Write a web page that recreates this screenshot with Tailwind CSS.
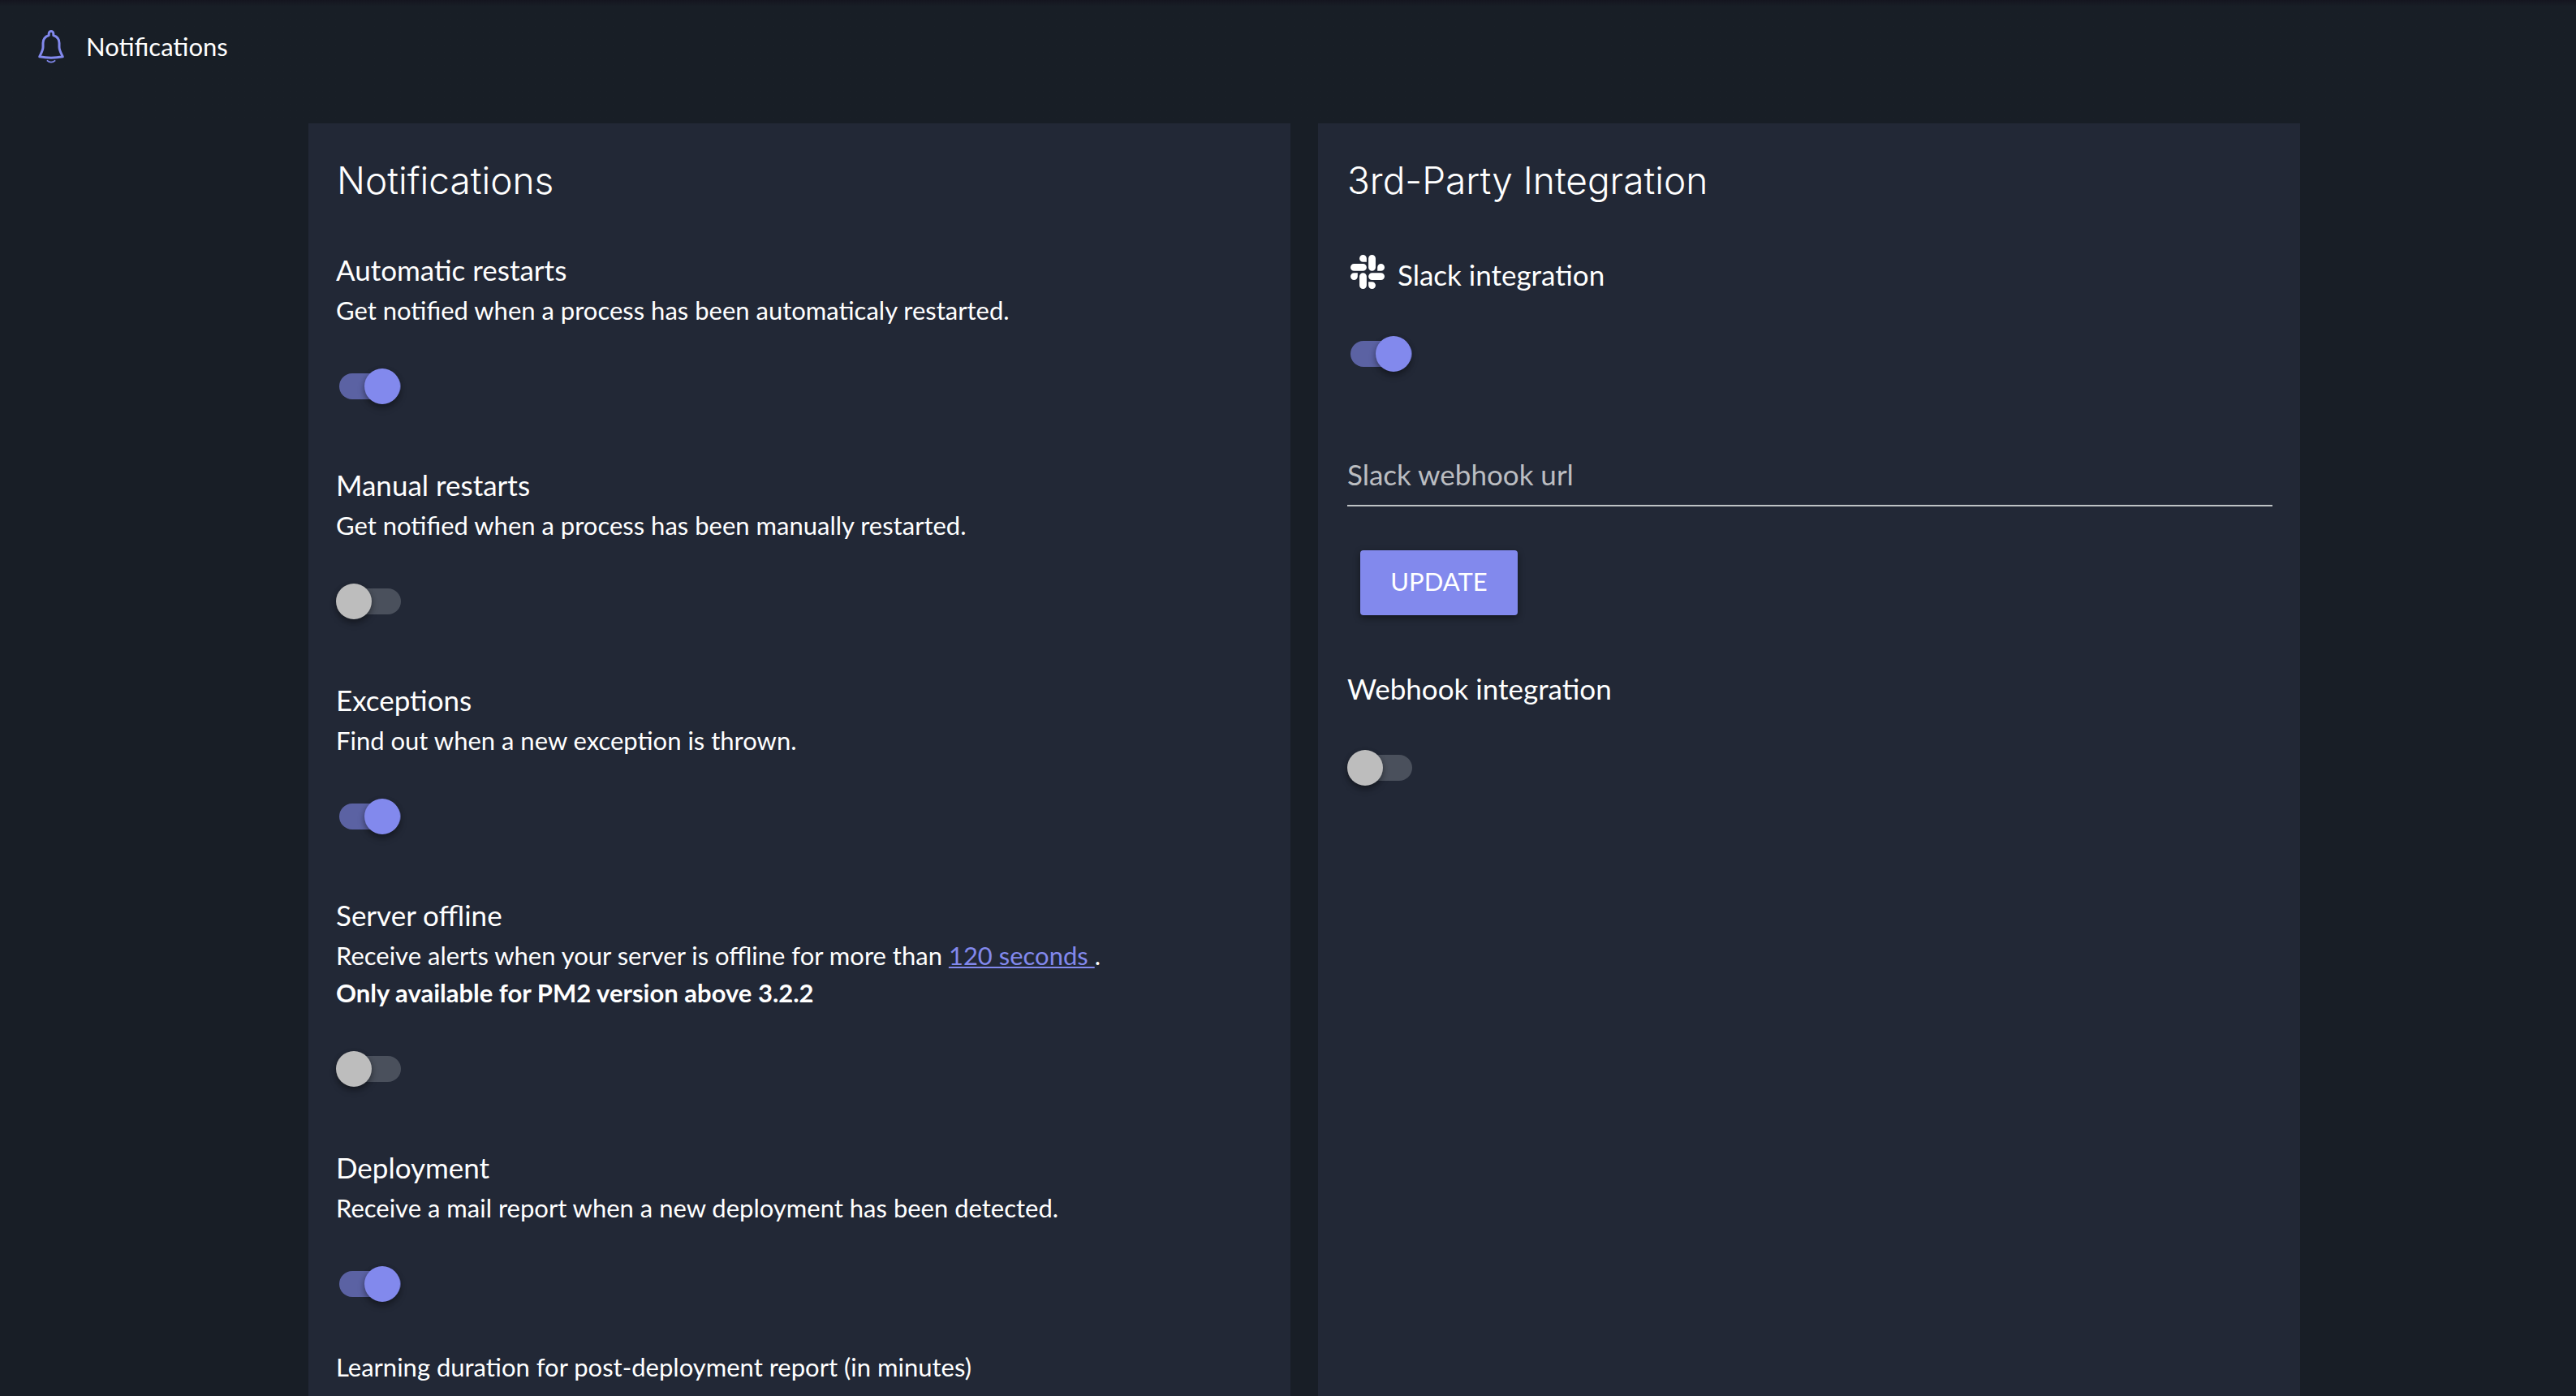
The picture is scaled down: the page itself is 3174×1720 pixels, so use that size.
<!DOCTYPE html>
<html lang="en">
<head>
<meta charset="utf-8">
<title>Notifications</title>
<meta name="viewport" content="width=device-width, initial-scale=1">
<script src="https://cdn.jsdelivr.net/npm/@tailwindcss/browser@4"></script>
</head>
<body class="flex h-screen flex-col overflow-hidden bg-[#181e26] font-['Lato',sans-serif] text-[31px] leading-[46px] text-white">

<header class="flex shrink-0 items-center gap-[26px] bg-linear-to-b from-[#14151f] to-[#181e26] to-[8px] pt-[34px] pr-[46px] pb-[72px] pl-[46px]">
  <svg class="h-[42px] w-[34px] shrink-0" viewBox="0 0 34 42" fill="none" stroke="#8289ed" aria-hidden="true">
    <path stroke-width="3" stroke-linejoin="round" d="M14.2 7.6V5.2a2.8 2.8 0 0 1 5.6 0V7.6C24.5 9 27 12.5 27 17V22C27 26 29.5 30 31.3 33.8Q17 36.6 2.7 33.8C4.5 30 7 26 7 22V17C7 12.5 9.5 9 14.2 7.6Z"/>
    <path stroke-width="1.6" d="M11.8 38.4Q17 43 22.2 38.4"/>
  </svg>
  <span>Notifications</span>
</header>

<main class="grid flex-1 grid-cols-2 gap-[34px] pr-[340px] pl-[380px]">

  <section class="bg-[#222836] px-[34px] pt-[40px]">
    <h1 class="pl-px font-['Inter',sans-serif] text-[46px] leading-[60px] font-light">Notifications</h1>

    <div class="mt-[57px] flex flex-col gap-[76px]">
      <div>
        <h2 id="auto" class="mb-1 text-[35px] leading-[46px]">Automatic restarts</h2>
        <p>Get notified when a process has been automaticaly restarted.</p>
        <input type="checkbox" role="switch" aria-labelledby="auto" checked class="relative mt-[49px] block h-[44px] w-[80px] appearance-none before:absolute before:top-[6px] before:right-0 before:left-[4px] before:h-[32px] before:rounded-full before:bg-[#4a505c] checked:before:bg-[#5b62a3] after:absolute after:top-0 after:left-0 after:size-[44px] after:rounded-full after:bg-[#bdbdbd] after:shadow-[0_2px_6px_#0003,0_5px_8px_#0004] checked:after:left-[35px] checked:after:bg-[#8289ed]">
      </div>

      <div>
        <h2 id="manual" class="mb-1 text-[35px] leading-[46px]">Manual restarts</h2>
        <p>Get notified when a process has been manually restarted.</p>
        <input type="checkbox" role="switch" aria-labelledby="manual" class="relative mt-[49px] block h-[44px] w-[80px] appearance-none before:absolute before:top-[6px] before:right-0 before:left-[4px] before:h-[32px] before:rounded-full before:bg-[#4a505c] checked:before:bg-[#5b62a3] after:absolute after:top-0 after:left-0 after:size-[44px] after:rounded-full after:bg-[#bdbdbd] after:shadow-[0_2px_6px_#0003,0_5px_8px_#0004] checked:after:left-[35px] checked:after:bg-[#8289ed]">
      </div>

      <div>
        <h2 id="exceptions" class="mb-1 text-[35px] leading-[46px]">Exceptions</h2>
        <p>Find out when a new exception is thrown.</p>
        <input type="checkbox" role="switch" aria-labelledby="exceptions" checked class="relative mt-[49px] block h-[44px] w-[80px] appearance-none before:absolute before:top-[6px] before:right-0 before:left-[4px] before:h-[32px] before:rounded-full before:bg-[#4a505c] checked:before:bg-[#5b62a3] after:absolute after:top-0 after:left-0 after:size-[44px] after:rounded-full after:bg-[#bdbdbd] after:shadow-[0_2px_6px_#0003,0_5px_8px_#0004] checked:after:left-[35px] checked:after:bg-[#8289ed]">
      </div>

      <div>
        <h2 id="offline" class="mb-1 text-[35px] leading-[46px]">Server offline</h2>
        <p>Receive alerts when your server is offline for more than <a href="#delay" class="text-[#8289ed] underline decoration-2 underline-offset-2">120 seconds </a>.</p>
        <p class="font-bold">Only available for PM2 version above 3.2.2</p>
        <input type="checkbox" role="switch" aria-labelledby="offline" class="relative mt-[49px] block h-[44px] w-[80px] appearance-none before:absolute before:top-[6px] before:right-0 before:left-[4px] before:h-[32px] before:rounded-full before:bg-[#4a505c] checked:before:bg-[#5b62a3] after:absolute after:top-0 after:left-0 after:size-[44px] after:rounded-full after:bg-[#bdbdbd] after:shadow-[0_2px_6px_#0003,0_5px_8px_#0004] checked:after:left-[35px] checked:after:bg-[#8289ed]">
      </div>

      <div>
        <h2 id="deployment" class="mb-1 text-[35px] leading-[46px]">Deployment</h2>
        <p>Receive a mail report when a new deployment has been detected.</p>
        <input type="checkbox" role="switch" aria-labelledby="deployment" checked class="relative mt-[49px] block h-[44px] w-[80px] appearance-none before:absolute before:top-[6px] before:right-0 before:left-[4px] before:h-[32px] before:rounded-full before:bg-[#4a505c] checked:before:bg-[#5b62a3] after:absolute after:top-0 after:left-0 after:size-[44px] after:rounded-full after:bg-[#bdbdbd] after:shadow-[0_2px_6px_#0003,0_5px_8px_#0004] checked:after:left-[35px] checked:after:bg-[#8289ed]">
        <p class="mt-[57px]">Learning duration for post-deployment report (in minutes)</p>
      </div>
    </div>
  </section>

  <section class="bg-[#222836] pt-[40px] pr-[34px] pl-[36px]">
    <h1 class="font-['Inter',sans-serif] text-[46px] leading-[60px] font-light">3rd-Party Integration</h1>

    <div class="mt-[62px] flex items-start gap-[16px] pl-1">
      <svg class="size-[42px] shrink-0" viewBox="0 0 24 24" fill="currentColor" aria-hidden="true">
        <path d="M5.042 15.165a2.528 2.528 0 0 1-2.52 2.523A2.528 2.528 0 0 1 0 15.165a2.527 2.527 0 0 1 2.522-2.52h2.52v2.52zM6.313 15.165a2.527 2.527 0 0 1 2.521-2.52 2.527 2.527 0 0 1 2.521 2.52v6.313A2.528 2.528 0 0 1 8.834 24a2.528 2.528 0 0 1-2.521-2.522v-6.313zM8.834 5.042a2.528 2.528 0 0 1-2.521-2.52A2.528 2.528 0 0 1 8.834 0a2.528 2.528 0 0 1 2.521 2.522v2.52H8.834zM8.834 6.313a2.528 2.528 0 0 1 2.521 2.521 2.528 2.528 0 0 1-2.521 2.521H2.522A2.528 2.528 0 0 1 0 8.834a2.528 2.528 0 0 1 2.522-2.521h6.312zM18.956 8.834a2.528 2.528 0 0 1 2.522-2.521A2.528 2.528 0 0 1 24 8.834a2.528 2.528 0 0 1-2.522 2.521h-2.522V8.834zM17.688 8.834a2.528 2.528 0 0 1-2.523 2.521 2.527 2.527 0 0 1-2.52-2.521V2.522A2.527 2.527 0 0 1 15.165 0a2.528 2.528 0 0 1 2.523 2.522v6.312zM15.165 18.956a2.528 2.528 0 0 1 2.523 2.522A2.528 2.528 0 0 1 15.165 24a2.527 2.527 0 0 1-2.52-2.522v-2.522h2.52zM15.165 17.688a2.527 2.527 0 0 1-2.52-2.523 2.526 2.526 0 0 1 2.52-2.52h6.313A2.527 2.527 0 0 1 24 15.165a2.528 2.528 0 0 1-2.522 2.523h-6.313z"/>
      </svg>
      <h2 id="slack" class="text-[35px] leading-[48px]">Slack integration</h2>
    </div>
    <input type="checkbox" role="switch" aria-labelledby="slack" checked class="relative mt-[52px] block h-[44px] w-[80px] appearance-none before:absolute before:top-[6px] before:right-0 before:left-[4px] before:h-[32px] before:rounded-full before:bg-[#4a505c] checked:before:bg-[#5b62a3] after:absolute after:top-0 after:left-0 after:size-[44px] after:rounded-full after:bg-[#bdbdbd] after:shadow-[0_2px_6px_#0003,0_5px_8px_#0004] checked:after:left-[35px] checked:after:bg-[#8289ed]">

    <form>
      <input type="url" aria-label="Slack webhook url" placeholder="Slack webhook url" class="mt-[103px] block h-[63px] w-full border-b-2 border-[#bfc3c5] bg-transparent pb-[15px] text-[35px] leading-[46px] outline-none placeholder:text-[#bbbdc1]">
      <button type="button" class="mt-[54px] ml-4 block h-[80px] w-[194px] rounded-[4px] bg-[#8289ed] pb-[4px] text-center shadow-[0_3px_8px_#0007]">UPDATE</button>
    </form>

    <h2 id="webhook" class="mt-[66px] text-[35px] leading-[48px]">Webhook integration</h2>
    <input type="checkbox" role="switch" aria-labelledby="webhook" class="relative mt-[52px] block h-[44px] w-[80px] appearance-none before:absolute before:top-[6px] before:right-0 before:left-[4px] before:h-[32px] before:rounded-full before:bg-[#4a505c] checked:before:bg-[#5b62a3] after:absolute after:top-0 after:left-0 after:size-[44px] after:rounded-full after:bg-[#bdbdbd] after:shadow-[0_2px_6px_#0003,0_5px_8px_#0004] checked:after:left-[35px] checked:after:bg-[#8289ed]">
  </section>
</main>
</body>
</html>
